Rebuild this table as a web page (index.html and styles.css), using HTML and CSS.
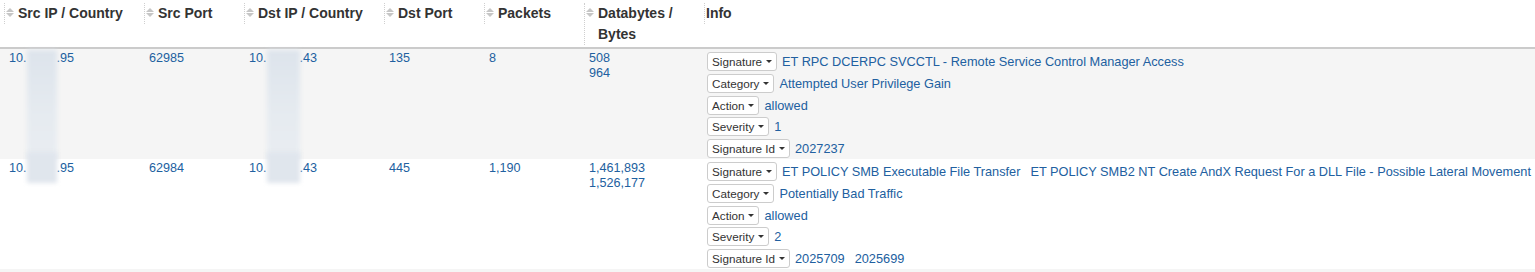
FILE: index.html
```html
<!DOCTYPE html>
<html lang="en">
<head>
<meta charset="utf-8">
<title>Alerts</title>
<link rel="stylesheet" href="styles.css">
</head>
<body>
<table class="grid">
  <colgroup>
    <col class="c-ip"><col class="c-port"><col class="c-ip"><col class="c-port"><col class="c-port"><col class="c-bytes"><col>
  </colgroup>
  <thead>
    <tr>
      <th><div class="th-in"><svg class="sort" viewBox="0 0 8 9" width="8" height="9"><path d="M0 4 L4 0 L8 4 Z M0 5 L4 9 L8 5 Z"/></svg><span>Src IP / Country</span></div></th>
      <th><div class="th-in"><svg class="sort" viewBox="0 0 8 9" width="8" height="9"><path d="M0 4 L4 0 L8 4 Z M0 5 L4 9 L8 5 Z"/></svg><span>Src Port</span></div></th>
      <th><div class="th-in"><svg class="sort" viewBox="0 0 8 9" width="8" height="9"><path d="M0 4 L4 0 L8 4 Z M0 5 L4 9 L8 5 Z"/></svg><span>Dst IP / Country</span></div></th>
      <th><div class="th-in"><svg class="sort" viewBox="0 0 8 9" width="8" height="9"><path d="M0 4 L4 0 L8 4 Z M0 5 L4 9 L8 5 Z"/></svg><span>Dst Port</span></div></th>
      <th><div class="th-in"><svg class="sort" viewBox="0 0 8 9" width="8" height="9"><path d="M0 4 L4 0 L8 4 Z M0 5 L4 9 L8 5 Z"/></svg><span>Packets</span></div></th>
      <th><div class="th-in"><svg class="sort" viewBox="0 0 8 9" width="8" height="9"><path d="M0 4 L4 0 L8 4 Z M0 5 L4 9 L8 5 Z"/></svg><span>Databytes / Bytes</span></div></th>
      <th><div class="th-in th-plain"><span>Info</span></div></th>
    </tr>
  </thead>
  <tbody>
    <tr class="odd">
      <td><a class="lnk">10.<span class="redact"><span class="blur tall"></span></span>.95</a></td>
      <td><a class="lnk">62985</a></td>
      <td><a class="lnk">10.<span class="redact wide"><span class="blur tall"></span></span>.43</a></td>
      <td><a class="lnk">135</a></td>
      <td><a class="lnk">8</a></td>
      <td><a class="lnk">508</a><br><a class="lnk">964</a></td>
      <td class="info-cell">
        <div class="info">
          <div class="line"><span class="btn">Signature<span class="caret"></span></span><span class="vals"><a class="lnk">ET RPC DCERPC SVCCTL - Remote Service Control Manager Access</a></span></div>
          <div class="line"><span class="btn">Category<span class="caret"></span></span><span class="vals"><a class="lnk">Attempted User Privilege Gain</a></span></div>
          <div class="line"><span class="btn">Action<span class="caret"></span></span><span class="vals"><a class="lnk">allowed</a></span></div>
          <div class="line"><span class="btn">Severity<span class="caret"></span></span><span class="vals"><a class="lnk">1</a></span></div>
          <div class="line"><span class="btn">Signature Id<span class="caret"></span></span><span class="vals"><a class="lnk">2027237</a></span></div>
        </div>
      </td>
    </tr>
    <tr>
      <td><a class="lnk">10.<span class="redact"><span class="blur short"></span></span>.95</a></td>
      <td><a class="lnk">62984</a></td>
      <td><a class="lnk">10.<span class="redact wide"><span class="blur short"></span></span>.43</a></td>
      <td><a class="lnk">445</a></td>
      <td><a class="lnk">1,190</a></td>
      <td><a class="lnk">1,461,893</a><br><a class="lnk">1,526,177</a></td>
      <td class="info-cell">
        <div class="info">
          <div class="line"><span class="btn">Signature<span class="caret"></span></span><span class="vals"><a class="lnk">ET POLICY SMB Executable File Transfer</a><a class="lnk">ET POLICY SMB2 NT Create AndX Request For a DLL File - Possible Lateral Movement</a></span></div>
          <div class="line"><span class="btn">Category<span class="caret"></span></span><span class="vals"><a class="lnk">Potentially Bad Traffic</a></span></div>
          <div class="line"><span class="btn">Action<span class="caret"></span></span><span class="vals"><a class="lnk">allowed</a></span></div>
          <div class="line"><span class="btn">Severity<span class="caret"></span></span><span class="vals"><a class="lnk">2</a></span></div>
          <div class="line"><span class="btn">Signature Id<span class="caret"></span></span><span class="vals"><a class="lnk">2025709</a><a class="lnk">2025699</a></span></div>
        </div>
      </td>
    </tr>
    <tr class="odd spacer-row">
      <td></td><td></td><td></td><td></td><td></td><td></td><td></td>
    </tr>
  </tbody>
</table>
</body>
</html>
```
FILE: styles.css
```css
html, body {
  margin: 0;
  padding: 0;
  background: #fff;
}
body {
  font-family: "Liberation Sans", Arial, Helvetica, sans-serif;
  color: #333;
  overflow: hidden;
}
.grid {
  width: 100%;
  border-collapse: collapse;
  table-layout: fixed;
}
.c-ip { width: 140px; }
.c-port { width: 100px; }
.c-bytes { width: 120px; }

.grid th {
  padding: 3px 0 2px 4px;
  text-align: left;
  vertical-align: top;
  font-size: 14px;
  font-weight: bold;
  color: #333;
  border-bottom: 2px solid #cbcbcb;
}
.th-in {
  display: flex;
  align-items: flex-start;
  gap: 4px;
  border-left: 1px dotted #cfcfcf;
  padding-left: 1px;
  line-height: 21px;
}
.th-plain { padding-left: 1px; }
.sort {
  flex: none;
  margin-top: 5px;
  fill: #c6c6c6;
}

.grid td {
  padding: 2px 4px 1px 9px;
  vertical-align: top;
  font-size: 12.6px;
  line-height: 15px;
  white-space: nowrap;
}
.grid tr.odd td { background: #f5f5f5; }
.grid tr.spacer-row td { height: 20px; padding: 0; }

.lnk {
  color: #2160a0;
  text-decoration: none;
}

.redact {
  display: inline-block;
  position: relative;
  width: 30px;
  height: 15px;
  vertical-align: top;
}
.redact.wide { width: 33px; }
.blur {
  position: absolute;
  left: 0;
  right: 0;
  background: #e0e6ed;
  filter: blur(2px);
}
.blur.tall {
  top: -1px;
  height: 110px;
  background: linear-gradient(#dde4ec, #e6ebf0 60%, #e9edf2);
}
.blur.short { top: -9px; height: 31px; }

.grid td.info-cell {
  padding: 3px 0 1px 7px;
}
.info {
  display: flex;
  flex-direction: column;
  gap: 2.75px;
}
.line {
  display: flex;
  align-items: center;
  gap: 5px;
  height: 19px;
}
.btn {
  flex: none;
  display: inline-flex;
  align-items: center;
  box-sizing: border-box;
  height: 19px;
  padding: 0 4px;
  border: 1px solid #ccc;
  border-radius: 3px;
  background: #fff;
  color: #333;
  font-size: 11.7px;
  line-height: 17px;
}
.caret {
  display: inline-block;
  width: 0;
  height: 0;
  margin-left: 4px;
  border-top: 3px solid #333;
  border-left: 3px solid transparent;
  border-right: 3px solid transparent;
}
.vals {
  display: flex;
  gap: 10px;
  font-size: 12.75px;
  line-height: 17px;
}
```
